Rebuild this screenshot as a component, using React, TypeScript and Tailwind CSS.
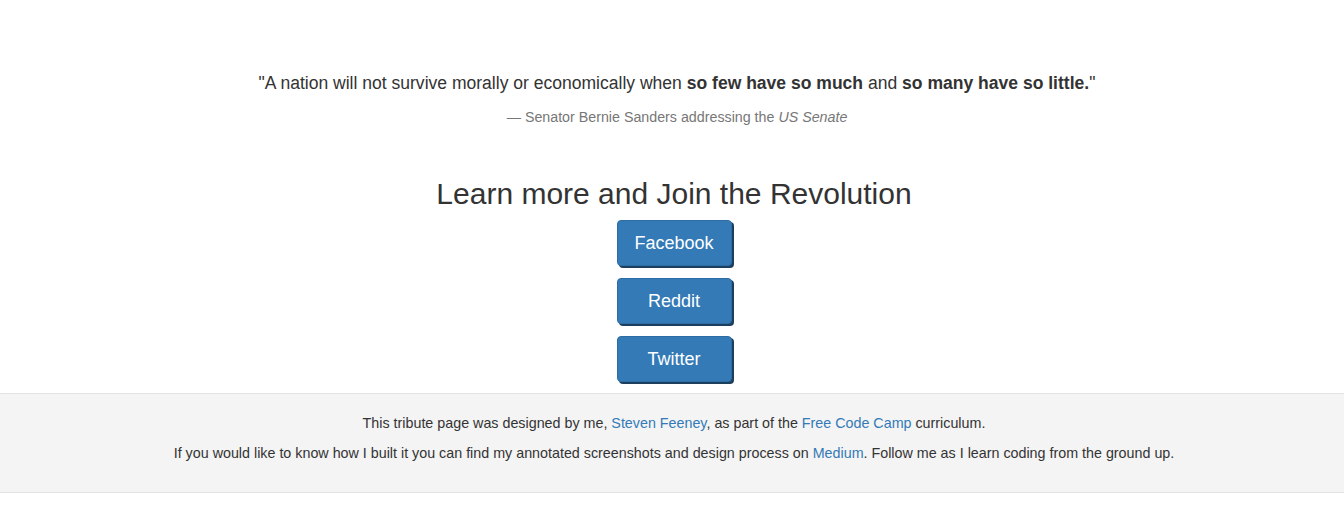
import React from "react";

export default function App() {
  const btn =
    "w-[115px] h-[46px] rounded-[4px] bg-[#337ab7] border border-[#2e6da4] text-white text-[18px] leading-none flex items-center justify-center shadow-[2px_2px_0_#1d3f5e]";
  return (
    <div className="min-h-[507px] bg-white text-[#333] font-['Liberation_Sans',Arial,sans-serif]">
      <div className="pt-[71px] pl-[4px] flex flex-col items-center">
        <div className="pl-[6px] flex flex-col items-center">
          <p className="text-[17.55px] leading-[25px]">
            "A nation will not survive morally or economically when <b>so few have so much</b> and{" "}
            <b>so many have so little.</b>"
          </p>
          <p className="mt-[11px] text-[14.25px] leading-[20px] text-[#777]">
            — Senator Bernie Sanders addressing the <i>US Senate</i>
          </p>
        </div>
        <h2 className="mt-[50px] text-[30px] leading-[33px]">Learn more and Join the Revolution</h2>
        <div className="mt-[10px] flex flex-col items-center gap-[12px]">
          <a className={btn}>Facebook</a>
          <a className={btn}>Reddit</a>
          <a className={btn}>Twitter</a>
        </div>
      </div>
      <footer className="mt-[11px] bg-[#f4f4f4] border-t border-b border-[#e3e3e3] pt-[19px] pb-[19px] pl-[4px] text-center text-[14.3px] leading-[20px] text-[#333]">
        <p className="mb-[10px]">
          This tribute page was designed by me, <a className="text-[#337ab7]">Steven Feeney</a>, as part of the{" "}
          <a className="text-[#337ab7]">Free Code Camp</a> curriculum.
        </p>
        <p className="mb-[10px]">
          If you would like to know how I built it you can find my annotated screenshots and design process on{" "}
          <a className="text-[#337ab7]">Medium</a>. Follow me as I learn coding from the ground up.
        </p>
      </footer>
    </div>
  );
}
